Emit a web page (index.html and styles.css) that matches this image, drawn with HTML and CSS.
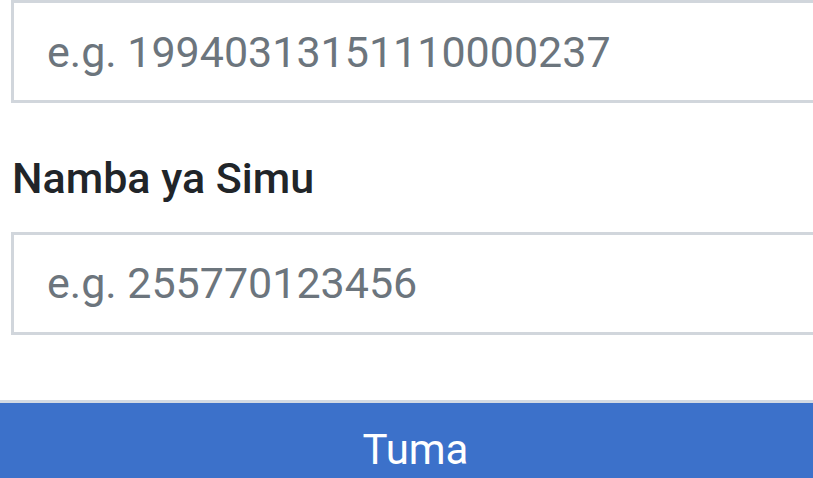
FILE: index.html
```html
<!DOCTYPE html>
<html lang="sw">
<head>
<meta charset="utf-8">
<title>Fomu</title>
<link rel="stylesheet" href="styles.css">
</head>
<body>
<form class="form">
  <div class="fields">
    <input class="field" type="text" placeholder="e.g. 19940313151110000237">
    <label class="label" for="simu">Namba ya Simu</label>
    <input class="field" id="simu" type="text" placeholder="e.g. 255770123456">
  </div>
  <button class="submit" type="button">Tuma</button>
</form>
</body>
</html>
```

FILE: styles.css
```css
html, body {
  margin: 0;
  padding: 0;
  background: #ffffff;
  overflow: hidden;
}
body {
  font-family: Roboto, "Liberation Sans", sans-serif;
  color: #212529;
}
.form {
  width: 831px;
  display: flex;
  flex-direction: column;
}
.fields {
  padding-left: 11px;
  display: flex;
  flex-direction: column;
}
.field {
  box-sizing: border-box;
  width: 840px;
  height: 103px;
  margin: 0;
  padding: 0 33px;
  border: 3px solid #d1d6dc;
  border-radius: 0;
  font-family: Roboto, "Liberation Sans", sans-serif;
  font-size: 43px;
  color: #495057;
  background: #fff;
  outline: none;
}
.field::placeholder {
  color: #6c757d;
  opacity: 1;
}
.label {
  display: block;
  margin: 50px 0 27px 1px;
  font-size: 43px;
  line-height: 1.2;
  font-weight: 500;
  color: #212529;
}
.submit {
  box-sizing: border-box;
  width: 831px;
  height: 110px;
  margin-top: 65px;
  padding: 17px 0 0 0;
  border: 0;
  border-top: 3px solid #d3dae3;
  background: #3c71ca;
  color: #ffffff;
  font-family: Roboto, "Liberation Sans", sans-serif;
  font-size: 42px;
  line-height: 60px;
  text-align: center;
  display: flex;
  justify-content: center;
  align-items: flex-start;
}
```
